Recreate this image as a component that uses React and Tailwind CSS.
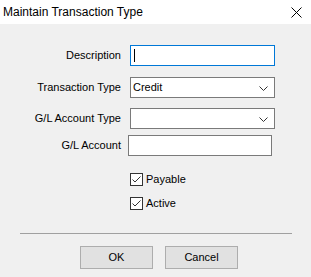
function Chevron() {
    return (
        <svg width="9" height="6" viewBox="0 0 9 6" className="absolute right-[6px] top-[8px]">
            <path d="M0.5 0.5 L4.5 4.5 L8.5 0.5" fill="none" stroke="#333" strokeWidth="1" />
        </svg>
    );
}

function Check({ label }) {
    return (
        <div className="flex items-center h-[13px]">
            <div className="w-[13px] h-[13px] border border-[#333] bg-white flex items-center justify-center">
                <svg width="11" height="11" viewBox="0 0 11 11">
                    <path d="M1.5 5.5 L4 8 L9.5 2.5" fill="none" stroke="#333" strokeWidth="1" />
                </svg>
            </div>
            <span className="ml-[3px]">{label}</span>
        </div>
    );
}

export default function App() {
    return (
        <div
            className="w-[311px] h-[277px] bg-[#f0f0f0] text-black text-[11px] leading-none overflow-hidden"
            style={{ fontFamily: '"Liberation Sans", Arial, sans-serif' }}
        >
            {/* title bar */}
            <div className="h-[24px] bg-white flex items-center justify-between pl-[3px] pr-[9px]">
                <span className="text-[12px]">Maintain Transaction Type</span>
                <svg width="11" height="11" viewBox="0 0 11 11">
                    <path d="M0.5 0.5 L10.5 10.5 M10.5 0.5 L0.5 10.5" stroke="#000" strokeWidth="1" />
                </svg>
            </div>

            <div className="flex flex-col pt-[21px]">
                <div className="flex items-center h-[21px]">
                    <label className="w-[121px] text-right">Description</label>
                    <div className="ml-[9px] w-[145px] h-[21px] border border-[#0078d7] bg-white flex items-center pl-[3px]">
                        <div className="w-px h-[13px] bg-black" />
                    </div>
                </div>

                <div className="flex items-center h-[21px] mt-[11px]">
                    <label className="w-[121px] text-right">Transaction Type</label>
                    <div className="relative ml-[9px] w-[145px] h-[21px] border border-[#7a7a7a] bg-white flex items-center pl-[2px]">
                        Credit
                        <Chevron />
                    </div>
                </div>

                <div className="flex items-center h-[21px] mt-[10px]">
                    <label className="w-[121px] text-right">G/L Account Type</label>
                    <div className="relative ml-[9px] w-[145px] h-[21px] border border-[#7a7a7a] bg-white">
                        <Chevron />
                    </div>
                </div>

                <div className="flex items-center h-[21px] mt-[6px]">
                    <label className="w-[121px] text-right">G/L Account</label>
                    <div className="ml-[7px] w-[144px] h-[21px] border border-[#7a7a7a] bg-white" />
                </div>

                <div className="flex flex-col gap-[11px] pl-[130px] mt-[17px]">
                    <Check label="Payable" />
                    <Check label="Active" />
                </div>

                <div className="ml-[20px] w-[272px] h-px bg-[#a0a0a0] mt-[23px]" />

                <div className="flex gap-[12px] pl-[80px] mt-[12px]">
                    <button className="w-[73px] h-[23px] bg-[#e1e1e1] border border-[#adadad]">OK</button>
                    <button className="w-[73px] h-[23px] bg-[#e1e1e1] border border-[#adadad]">Cancel</button>
                </div>
            </div>
        </div>
    );
}
